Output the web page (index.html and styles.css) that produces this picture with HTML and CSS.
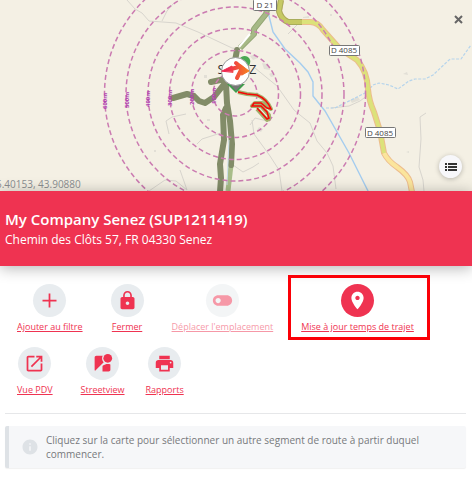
FILE: index.html
```html
<!DOCTYPE html>
<html lang="fr">
<head>
    <meta charset="UTF-8">
    <meta name="viewport" content="width=device-width, initial-scale=1.0">
    <title>My Company Senez</title>
    <link rel="stylesheet" href="styles.css">
</head>
<body>
    <div class="map">
        <svg class="map-canvas" viewBox="0 0 472 191" preserveAspectRatio="xMidYMid slice" role="img" aria-label="Carte de Senez">
            <defs>
                <linearGradient id="logo" gradientUnits="userSpaceOnUse" x1="222" y1="0" x2="249" y2="0">
                    <stop offset="0.2" stop-color="#ee2850"/>
                    <stop offset="1" stop-color="#f58220"/>
                </linearGradient>
            </defs>
            <rect width="472" height="191" fill="#f4f0e4"/>

            <!-- paths and minor roads -->
            <g fill="none" stroke="#d8d5ce" stroke-width="1">
                <path d="M127 0l8 9 7 4 7 8 27 2 22 9 34 16 7 1"/>
                <path d="M162 21l5-10 6-7M288 34l9-9M255 68l22 18 17 24 6 5 10 8 7 18 10 12 6 13 3 23"/>
                <path d="M331 108l18-2 11-5 8-6M426 113l-6 4 1 22-2 28 4 13 1 11"/>
                <path d="M169 134l-3-13 6-4 14-3M197 144l5-5 22-7M180 170l7 20M149 191l16-11 11 1 11 9"/>
                <path d="M250 125l5-7 12 3M252 120l2 14 16 22 9 14 3 21M233 165l10 7 10-5 6-4"/>
            </g>
            <g fill="#e2dfd6">
                <path d="M250 56l5-2 3 4-5 2zM262 63l6 1 2 6-6-1zM269 74l4-2 2 4-4 1zM350 100l8-3 2 3-8 3zM403 74l4-2 1 3zM303 17l6-1v2h-6zM204 75h3v3h-3zM207 119h3v2h-3zM154 150h2v2h-2zM330 14h2v2h-2zM406 152l3-1v2zM259 127l4 2-2 3-4-2z"/>
            </g>

            <!-- water -->
            <path d="M268 12l5 20 12 17 15 14 8 9 5 10v14l12 15 24 42 20 40" fill="none" stroke="#a5cdef" stroke-width="1.4"/>
            <path d="M326 108h9l32-16 6-7 6-2 10 2 9 4 11-8 6-2h10l8-4 16-15 2-1h10l10-14" fill="none" stroke="#b5d4ec" stroke-width="1.2" stroke-dasharray="3 1.5"/>

            <!-- departmental roads -->
            <g fill="none" stroke-linejoin="round">
                <path d="M281 0l-2 11q2 8 9 11l22 0q8 0 13 8l17 19 17 11q10 11 11 29 1 12 6 23l6 19 4 22q4 8 13 14 11 8 13 15l2 10" stroke="#edbd8d" stroke-width="6"/>
                <path d="M384 153q4 8 13 14 11 8 13 15l2 10" stroke="#fbe59c" stroke-width="4"/>
                <path d="M300 22h10q8 0 13 8l17 19 17 11q10 11 11 29 1 12 6 23l6 19 4 22" stroke="#dce27a" stroke-width="4"/>
                <path d="M281 0l-2 11q2 8 9 11h14" stroke="#a9ad5b" stroke-width="6"/>
                <path d="M281 0l-2 11q2 8 9 11h14" stroke="#c6c963" stroke-width="4"/>
                <path d="M267 10l-1 4-12 15v5l-14 14" stroke="#92a573" stroke-width="6"/>
                <path d="M267 10l-1 4-12 15v5l-14 14" stroke="#a6b986" stroke-width="4"/>
                <path d="M250 34l-11 13" stroke="#fff" stroke-width="2"/>
                <path d="M231 165l-3 26" stroke="#a8bd89" stroke-width="5"/>
            </g>

            <!-- isochrone branches -->
            <g fill="none" stroke="#828c68" stroke-width="6" stroke-linejoin="round" stroke-linecap="round">
                <path d="M173 98l14-4 7 2 5 5 6 2 9-6 11-14M211 82l14-3M237 50l-3 16-8 18 1 19 3 18 2 23-1 21"/>
                <path d="M226 108l-3 7 1 25-4 24 1 14-1 14"/>
            </g>
            <path d="M229 140l-2 45" fill="none" stroke="#c7dce6" stroke-width="1"/>

            <!-- distance rings -->
            <g fill="none" stroke="#cb7bb1" stroke-width="1.5" stroke-dasharray="5 3">
                <circle cx="235" cy="94" r="22"/>
                <circle cx="235" cy="94" r="43.5"/>
                <circle cx="235" cy="94" r="65.5"/>
                <circle cx="235" cy="94" r="87"/>
                <circle cx="235" cy="94" r="109"/>
                <circle cx="235" cy="94" r="130.5"/>
            </g>
            <g class="ring-label">
                <text transform="translate(107 109) rotate(-90)">600m</text>
                <text transform="translate(129 108) rotate(-90)">500m</text>
                <text transform="translate(150 107) rotate(-90)">400m</text>
                <text transform="translate(172 106) rotate(-90)">300m</text>
                <text transform="translate(194 105) rotate(-90)">200m</text>
                <text transform="translate(216 104) rotate(-90)">100m</text>
            </g>

            <!-- selected segment -->
            <path d="M238 92l9 2 10 1q10 4 14 14l-9-6-7 0-3 3h9l8 9v4l-2 1-10-11" fill="none" stroke="#a4af6c" stroke-width="4" stroke-linejoin="round"/>
            <path d="M238 92l9 2 10 1q10 4 14 14l-4-1-6-5h-7l-2 3h9l6 6 2 6-2 1-10-11" fill="none" stroke="#f80505" stroke-width="1.5"/>

            <g class="road-label">
                <rect x="253.500" y="-0.500" width="23" height="11" rx="1"/>
                <text x="265" y="8">D 21</text>
                <rect x="329.500" y="45.500" width="30" height="10" rx="1"/>
                <text x="344" y="53">D 4085</text>
                <rect x="365.500" y="127.500" width="30" height="10" rx="1"/>
                <text x="380" y="136">D 4085</text>
            </g>

            <text class="town" x="237" y="74">SENEZ</text>

            <!-- company marker -->
            <path d="M238 60q5-6 10-3 4 3 1 9z" fill="#4aa853"/>
            <path d="M227 84l9 9 9-9z" fill="#3e9d4b"/>
            <path d="M229 83l7 8 7-8z" fill="#777"/>
            <circle cx="235.500" cy="71.500" r="14" fill="#fff" stroke="#999"/>
            <g stroke="url(#logo)" fill="url(#logo)" stroke-linejoin="round" stroke-linecap="round">
                <path d="M222 71l10-5 1 6z"/>
                <path d="M241 65l8 6-7 4z"/>
                <path d="M231 69l8-2M236 63l6 5-5 10" stroke-width="4" fill="none"/>
            </g>
        </svg>
        <span class="coords">5.40153, 43.90880</span>
        <button class="close-button" type="button" aria-label="Fermer la fiche">
            <svg width="9" height="9" viewBox="0 0 9 9"><path d="M1 1l7 7M8 1l-7 7" stroke="#666" stroke-width="2"/></svg>
        </button>
        <button class="list-button" type="button" aria-label="Liste">
            <svg width="12" height="8" viewBox="0 0 12 8"><path d="M0 1h2M3 1h9M0 4h2M3 4h9M0 7h2M3 7h9" stroke="#333" stroke-width="2"/></svg>
        </button>
    </div>

    <header class="company">
        <h1>My Company Senez (SUP1211419)</h1>
        <p>Chemin des Clôts 57, FR 04330 Senez</p>
    </header>

    <main class="panel">
        <div class="actions">
            <div class="action-row">
                <button class="action" type="button">
                    <span class="icon"><svg viewBox="0 0 24 24"><path d="M20 13h-7v7h-2v-7H4v-2h7V4h2v7h7z"/></svg></span>
                    <span class="label">Ajouter au filtre</span>
                </button>
                <button class="action" type="button">
                    <span class="icon"><svg viewBox="0 0 24 24"><path d="M18 8h-1V6c0-2.760-2.240-5-5-5S7 3.240 7 6v2H6c-1.100 0-2 .9-2 2v10c0 1.100.9 2 2 2h12c1.100 0 2-.9 2-2V10c0-1.100-.9-2-2-2zm-6 9c-1.100 0-2-.9-2-2s.9-2 2-2 2 .9 2 2-.9 2-2 2zm3.100-9H8.900V6c0-1.710 1.390-3.100 3.100-3.100s3.100 1.390 3.100 3.100v2z"/></svg></span>
                    <span class="label">Fermer</span>
                </button>
                <button class="action" type="button" disabled>
                    <span class="icon"><svg viewBox="0 0 24 24"><path d="M17 6H7c-3.310 0-6 2.690-6 6s2.690 6 6 6h10c3.310 0 6-2.690 6-6s-2.690-6-6-6zM7 15c-1.660 0-3-1.340-3-3s1.340-3 3-3 3 1.340 3 3-1.340 3-3 3z"/></svg></span>
                    <span class="label">Déplacer l'emplacement</span>
                </button>
                <button class="action active" type="button">
                    <span class="icon"><svg viewBox="0 0 24 24"><path d="M12 2C8.130 2 5 5.130 5 9c0 5.250 7 13 7 13s7-7.750 7-13c0-3.870-3.130-7-7-7zm0 9.500c-1.380 0-2.500-1.120-2.500-2.500s1.120-2.500 2.500-2.500 2.500 1.120 2.500 2.500-1.120 2.500-2.500 2.500z"/></svg></span>
                    <span class="label">Mise à jour temps de trajet</span>
                </button>
            </div>
            <div class="action-row">
                <button class="action" type="button">
                    <span class="icon"><svg viewBox="0 0 24 24"><path d="M19 19H5V5h7V3H5c-1.110 0-2 .9-2 2v14c0 1.100.89 2 2 2h14c1.100 0 2-.9 2-2v-7h-2v7zM14 3v2h3.590l-9.830 9.830 1.410 1.410L19 6.410V10h2V3h-7z"/></svg></span>
                    <span class="label">Vue PDV</span>
                </button>
                <div class="action-group">
                    <button class="action" type="button">
                        <span class="icon"><svg viewBox="0 0 24 24"><path d="M12.560 14.330c-.34.270-.56.700-.56 1.170V21h7c1.100 0 2-.9 2-2v-5.980c-.94-.33-1.950-.52-3-.52-2.030 0-3.930.7-5.440 1.830z"/><circle cx="18" cy="6" r="5"/><path d="M11.500 6c0-1.080.27-2.100.74-3H5c-1.100 0-2 .9-2 2v14c0 .55.230 1.050.59 1.410l9.820-9.820C12.230 9.420 11.500 7.800 11.500 6z"/></svg></span>
                        <span class="label">Streetview</span>
                    </button>
                    <button class="action" type="button">
                        <span class="icon"><svg viewBox="0 0 24 24"><path d="M19 8H5c-1.660 0-3 1.340-3 3v6h4v4h12v-4h4v-6c0-1.660-1.340-3-3-3zm-3 11H8v-5h8v5zm3-7c-.55 0-1-.45-1-1s.45-1 1-1 1 .45 1 1-.45 1-1 1zm-1-9H6v4h12V3z"/></svg></span>
                        <span class="label">Rapports</span>
                    </button>
                </div>
            </div>
        </div>

        <div class="notice">
            <svg class="notice-icon" viewBox="0 0 24 24"><path d="M12 2C6.480 2 2 6.480 2 12s4.480 10 10 10 10-4.480 10-10S17.520 2 12 2zm1 15h-2v-6h2v6zm0-8h-2V7h2v2z"/></svg>
            <p>Cliquez sur la carte pour sélectionner un autre segment de route à partir duquel commencer.</p>
        </div>
    </main>
</body>
</html>
```

FILE: styles.css
```css
* {
    box-sizing: border-box;
}
body {
    margin: 0;
    background-color: #fff;
    color: #76797c;
    font-family: "Open Sans", "Noto Sans", sans-serif;
}
button {
    margin: 0;
    padding: 0;
    border: none;
    background: none;
    font-family: inherit;
    cursor: pointer;
}
.map {
    position: relative;
    height: 191px;
    overflow: hidden;
}
.map-canvas {
    display: block;
    width: 100%;
    height: 100%;
}
.road-label rect {
    fill: #fff;
    stroke: #777;
}
.road-label text {
    font-size: 8px;
    fill: #444;
    text-anchor: middle;
}
.ring-label {
    font-size: 6px;
    font-weight: bold;
    fill: #b040b0;
}
.town {
    font-size: 13px;
    fill: #333;
    text-anchor: middle;
}
.coords {
    position: absolute;
    left: -4px;
    bottom: 0;
    font-size: 10px;
    line-height: 14px;
    color: #8b8e91;
}
.close-button {
    position: absolute;
    top: 15px;
    right: 9px;
    display: flex;
}
.list-button {
    position: absolute;
    right: 10px;
    bottom: 13px;
    display: flex;
    align-items: center;
    justify-content: center;
    width: 23px;
    height: 23px;
    border-radius: 50%;
    background-color: #f7f7fa;
    box-shadow: 0 1px 5px rgba(0, 0, 0, 0.25);
}
.company {
    position: relative;
    padding: 17px 5px 16px;
    background-color: #ef3351;
    color: #fff;
    box-shadow: 0 2px 14px rgba(0, 0, 0, 0.3);
}
.company h1 {
    margin: 0;
    font-size: 15px;
    font-weight: 600;
    line-height: 22px;
}
.company p {
    margin: 0;
    font-size: 12px;
    line-height: 20px;
}
.panel {
    padding: 18px 6px 8px 5px;
}
.actions {
    padding: 0 12px 16px;
    border-bottom: 1px solid #e6e7e9;
}
.action-row {
    display: flex;
    gap: 28px;
    margin-bottom: 13px;
}
.action-row:last-child {
    margin-bottom: 0;
}
.action-group {
    display: flex;
    gap: 21px;
}
.action {
    position: relative;
    display: flex;
    flex-direction: column;
    align-items: center;
    gap: 3px;
    color: #ef3351;
}
.icon {
    display: flex;
    align-items: center;
    justify-content: center;
    width: 33px;
    height: 33px;
    border-radius: 50%;
    background-color: #e8ecef;
}
.icon svg {
    width: 21px;
    height: 21px;
    fill: currentColor;
}
.label {
    font-size: 9px;
    line-height: 14px;
    white-space: nowrap;
    text-decoration: underline;
}
.action:disabled {
    opacity: 0.5;
    cursor: default;
}
.active .icon {
    background-color: #ef3351;
    color: #fff;
}
.active .label {
    color: #ef3351;
}
.active::after {
    content: "";
    position: absolute;
    inset: -9px -16px -6px -13px;
    border: 3px solid #fb0007;
}
.notice {
    display: flex;
    align-items: center;
    gap: 7px;
    margin-top: 12px;
    padding: 7px 10px 7px 12px;
    border-left: 4px solid #dee2e6;
    border-radius: 2px;
    background-color: #f6f7f9;
    box-shadow: 0 1px 1px rgba(0, 0, 0, 0.06);
}
.notice-icon {
    flex: none;
    width: 18px;
    height: 18px;
    fill: #dee2e6;
}
.notice p {
    margin: 0;
    font-size: 10px;
    line-height: 14px;
}
```
